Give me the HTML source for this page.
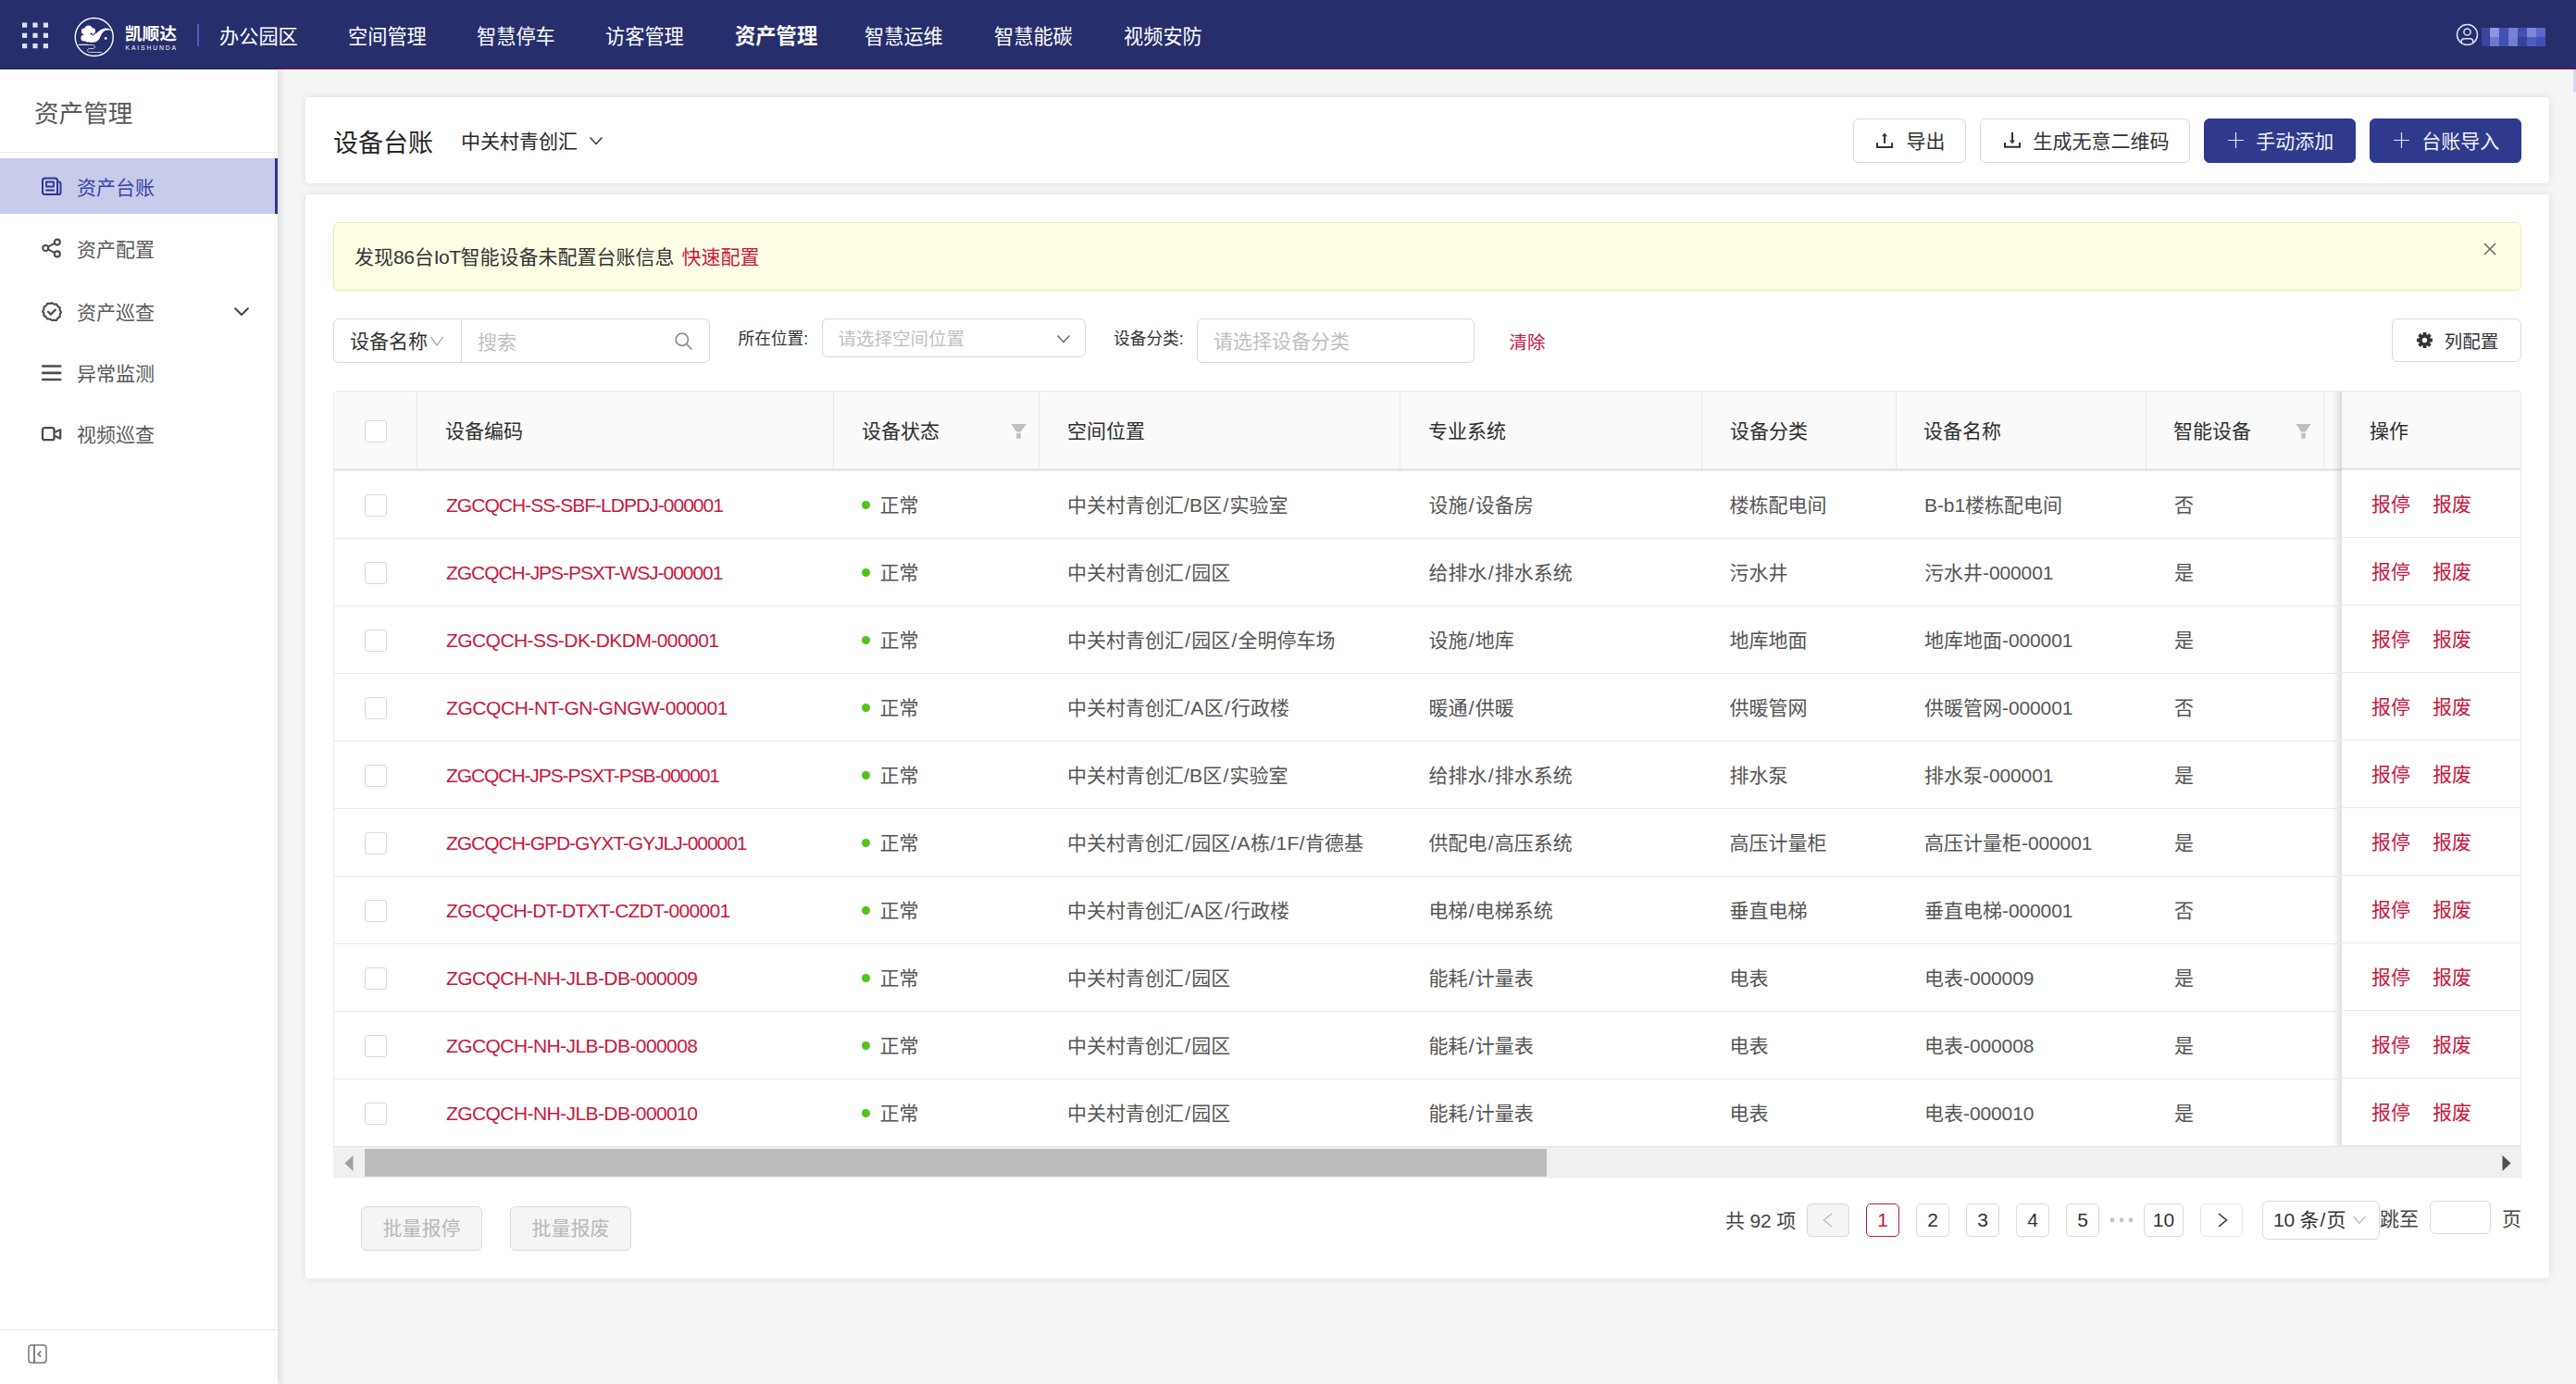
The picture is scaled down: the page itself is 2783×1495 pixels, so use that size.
<!DOCTYPE html>
<html lang="zh-CN"><head><meta charset="utf-8"><title>设备台账</title>
<style>
*{box-sizing:border-box;margin:0;padding:0}
html,body{width:2783px;height:1495px;overflow:hidden}
body{background:#f5f5f5;font-family:"Liberation Sans","Noto Sans CJK SC",sans-serif;font-size:21px;color:#595959;position:relative}
.a{position:absolute}
svg{position:absolute;overflow:visible}
#hd{position:absolute;left:0;top:0;width:2783px;height:75px;background:#272e6c}
.nav{position:absolute;top:0;height:75px;line-height:79px;color:#fff;font-size:21.2px;white-space:nowrap}
.nav.on{font-weight:700;font-size:22.3px}
#sb{position:absolute;left:0;top:75px;width:300px;height:1420px;background:#fff;box-shadow:2px 0 8px rgba(0,0,0,.12)}
.mi{position:absolute;left:0;width:300px;height:60px;line-height:60px;color:#595959;font-size:21px}
.mi span{position:absolute;left:83px;top:2px;white-space:nowrap}
.mi.on{background:#c9cbeb;color:#3644a6;border-right:3px solid #2f3a8c}
.card{position:absolute;left:330px;width:2424px;background:#fff;border-radius:4px;box-shadow:0 0 8px rgba(0,0,0,.1)}
.btn{position:absolute;top:128px;height:48px;border:1px solid #d9d9d9;border-radius:6px;background:#fff;color:#333;font-size:21px;line-height:47px;white-space:nowrap}
.btn.p{background:#2f3a8c;border-color:#2f3a8c;color:#f0f1fd}
.btn span{position:absolute;top:0}
.t{position:absolute;white-space:nowrap}
.box{position:absolute;border:1px solid #d9d9d9;border-radius:6px;background:#fff}
.ph{color:#bfbfbf}
.red{color:#c8183c}
.th{position:absolute;top:423px;height:83px;line-height:86px;color:#2e2e2e;font-size:21px;font-weight:400;white-space:nowrap}
.vd{position:absolute;top:423px;width:1px;height:83px;background:#e9e9e9}
.tr{position:absolute;left:361px;width:2169px;height:73px;border-bottom:1px solid #e9e9e9;line-height:74px}
.fr{position:absolute;left:2530px;width:193px;height:73px;border-bottom:1px solid #e9e9e9;line-height:74px;background:#fff}
.td{position:absolute;top:0;white-space:nowrap;color:#555}
.td.code{color:#c8183c}
.lk{position:absolute;top:0;color:#c8183c;white-space:nowrap}
.cb{position:absolute;width:24px;height:24px;border:1px solid #d9d9d9;border-radius:3px;background:#fff}
.dot{position:absolute;left:570px;top:32px;width:9px;height:9px;border-radius:50%;background:#52c41a}
.pg{position:absolute;top:1300px;height:36px;border:1px solid #d9d9d9;border-radius:5px;background:#fff;color:#333;font-family:"Liberation Sans",sans-serif;font-size:21px;line-height:33px;text-align:center}

</style></head><body>
<div id="hd">
<svg style="left:24px;top:24px" width="29" height="29" viewBox="0 0 29 29" fill="#dfe1f8"><rect x="0" y="0.5" width="5.2" height="5.2"/><rect x="11.4" y="0.5" width="5.2" height="5.2"/><rect x="22.8" y="0.5" width="5.2" height="5.2"/><rect x="0" y="11.7" width="5.2" height="5.2"/><rect x="11.4" y="11.7" width="5.2" height="5.2"/><rect x="22.8" y="11.7" width="5.2" height="5.2"/><rect x="0" y="23" width="5.2" height="5.2"/><rect x="11.4" y="23" width="5.2" height="5.2"/><rect x="22.8" y="23" width="5.2" height="5.2"/></svg>
<svg style="left:80px;top:18px" width="44" height="44" viewBox="0 0 44 44" fill="none" stroke="#fff">
<circle cx="21.75" cy="22" r="20.5" stroke-width="1.4"/>
<g fill="#fff" stroke="none"><circle cx="15.6" cy="14" r="4.5"/><circle cx="11.2" cy="15.8" r="3.3"/><circle cx="19.7" cy="15.6" r="3.3"/><circle cx="11" cy="23" r="3.6"/><circle cx="15.3" cy="19.3" r="4.6"/><circle cx="18.6" cy="24.3" r="3.8"/><circle cx="14.6" cy="24.6" r="3"/>
<path d="M20.5 19.8c2.6-.6 4.4-2.600 6.400-4.200 3-2.400 6.600-3.800 10.200-2.700 1.600.5 3 1.400 4 2.700-1.700-.9-3.400-1.300-5.200-1.100-3 .3-5 2.300-6.300 4.700-1.500 2.800-2.400 6.300-5.600 7.800-1.200.6-2.600.7-3.900.4z"/>
<circle cx="34.2" cy="23.4" r="1.35"/></g>
<circle cx="18.7" cy="18.7" r="1.1" fill="#272e6c" stroke="none"/>
<path d="M4.700 30.500h15.300c3.300 0 3.300 4 0 4h-3.300c-2.800 0-2.800 4 0 4h13.500" stroke-width="0.800" stroke-opacity="0.9"/>
<path d="M4.900 30.300h10" stroke-width="1.200" stroke-opacity="0.700"/>
</svg>
<div class="a" style="left:135px;top:25px;font-size:18.500px;line-height:24px;font-weight:700;color:#fff;letter-spacing:0.200px;white-space:nowrap">凯顺达</div>
<div class="a" style="left:135.5px;top:47px;font-size:6.800px;line-height:10px;color:#fff;letter-spacing:1.850px;white-space:nowrap">KAISHUNDA</div>
<div class="a" style="left:213px;top:26px;width:2px;height:24px;background:#4d5ccc"></div>
<div class="nav" style="left:237px">办公园区</div>
<div class="nav" style="left:376px">空间管理</div>
<div class="nav" style="left:515px">智慧停车</div>
<div class="nav" style="left:654px">访客管理</div>
<div class="nav on" style="left:794px">资产管理</div>
<div class="nav" style="left:934px">智慧运维</div>
<div class="nav" style="left:1074px">智慧能碳</div>
<div class="nav" style="left:1214px">视频安防</div>
<svg style="left:2653px;top:25px" width="25" height="25" viewBox="0 0 25 25" fill="none" stroke="#e0e2fa" stroke-width="1.500"><circle cx="12.500" cy="12.500" r="11"/><circle cx="12.500" cy="9.500" r="3.600"/><path d="M6.200 21.500v-1.500c0-2 1.400-3.200 3.200-3.200h6.200c1.800 0 3.200 1.200 3.200 3.200v1.500"/></svg>
<div class="a" style="left:2681px;top:30px;width:69px;height:20px;background:#4050b5"></div>
<div class="a" style="left:2681px;top:30px;width:9px;height:20px;background:#3a45a0"></div>
<div class="a" style="left:2690px;top:30px;width:10px;height:10px;background:#8f96d8"></div>
<div class="a" style="left:2690px;top:40px;width:10px;height:10px;background:#7078cc"></div>
<div class="a" style="left:2710px;top:30px;width:10px;height:10px;background:#7880d0"></div>
<div class="a" style="left:2710px;top:40px;width:10px;height:10px;background:#747ed0"></div>
<div class="a" style="left:2720px;top:40px;width:10px;height:10px;background:#38429a"></div>
<div class="a" style="left:2730px;top:30px;width:10px;height:10px;background:#8088d4"></div>
<div class="a" style="left:2730px;top:40px;width:10px;height:10px;background:#4e5cc4"></div>
<div class="a" style="left:2740px;top:30px;width:10px;height:10px;background:#5a66c8"></div>
</div>
<div class="a" style="left:0;top:74px;width:300px;height:1px;background:#1a2360"></div><div class="a" style="left:300px;top:74px;width:2483px;height:1px;background:#8a1432"></div>
<div class="a" style="left:2780px;top:75px;width:3px;height:24px;background:#d4d7f0"></div>

<div id="sb">
<div class="t" style="left:37px;top:29px;font-size:26.600px;line-height:38px;color:#595959">资产管理</div>
<div class="a" style="left:0;top:89px;width:300px;height:1px;background:#ececec"></div>
<div class="mi on" style="top:96px"><svg style="left:45px;top:20px" width="22" height="21" viewBox="0 0 22 21" fill="none" stroke="#2c3890" stroke-width="2" stroke-linecap="round" stroke-linejoin="round"><rect x="1" y="1.500" width="16" height="17.500" rx="2.500"/><path d="M17 5.500h1.500c1.400 0 2 .8 2 2v9.500c0 1.200-.8 2-2 2h-2"/><rect x="5" y="5.500" width="8" height="5" stroke-width="1.800"/><path d="M5 14.500h8" stroke-width="1.800"/></svg><span>资产台账</span></div>
<div class="mi" style="top:163px"><svg style="left:45px;top:19px" width="22" height="22" viewBox="0 0 22 22" fill="none" stroke="#4d4d4d" stroke-width="2.100"><circle cx="4.200" cy="11" r="3"/><circle cx="16.800" cy="4.600" r="3"/><circle cx="16.800" cy="17.400" r="3"/><path d="M6.900 9.600l7.200-3.700M6.900 12.400l7.200 3.700"/></svg><span>资产配置</span></div>
<div class="mi" style="top:231px"><svg style="left:45px;top:20px" width="22" height="22" viewBox="0 0 22 22" fill="none" stroke="#4d4d4d" stroke-width="2.200" stroke-linejoin="round"><path d="M11 1.300l2.400 1.400h2.800l1.400 2.400 2.400 1.400v2.800l1.400 2.400-1.400 2.400v2.800l-2.400 1.400-1.400 2.400h-2.800L11 20.700l-2.400-1.400H5.800l-1.400-2.400L2 15.500v-2.800L.6 11 2 8.600V5.800l2.400-1.400 1.400-2.400h2.800z" transform="translate(0.500,0) scale(0.960)"/><path d="M7 10.800l2.800 2.800 5-5" stroke-linecap="round"/></svg><span>资产巡查</span><svg style="left:253px;top:26px" width="16" height="10" viewBox="0 0 16 10" fill="none" stroke="#444" stroke-width="2" stroke-linecap="round" stroke-linejoin="round"><path d="M1.200 1.200L8 8l6.800-6.800"/></svg></div>
<div class="mi" style="top:297px"><svg style="left:45px;top:21.500px" width="22" height="18" viewBox="0 0 22 18" fill="none" stroke="#4d4d4d" stroke-width="2.700" stroke-linecap="round"><path d="M1.200 1.500h19M1.200 8.800h19M1.200 16h19"/></svg><span>异常监测</span></div>
<div class="mi" style="top:363.300px"><svg style="left:45px;top:22.700px" width="22" height="16" viewBox="0 0 22 16" fill="none" stroke="#4d4d4d" stroke-width="2.300" stroke-linejoin="round"><rect x="1" y="1.200" width="12.500" height="13" rx="2"/><path d="M13.800 6l6.400-2.800v9.400L13.800 9.800"/></svg><span>视频巡查</span></div>
<div class="a" style="left:0;top:1361px;width:300px;height:1px;background:#e4e4e4"></div>
<svg style="left:30px;top:1377px" width="21" height="21" viewBox="0 0 21 21" fill="none" stroke="#777" stroke-width="1.500" stroke-linejoin="round"><rect x="1" y="1" width="19" height="19" rx="3"/><path d="M7 1v19" stroke="#555"/><path d="M13.600 8.200l-2.500 2.400 2.500 2.400" stroke-width="1.800" stroke-linecap="round"/></svg>
</div>

<div class="card" style="top:105px;height:93px"></div>
<div class="card" style="top:210px;height:1171px"></div>
<div class="t" style="left:360px;top:134.5px;font-size:27px;line-height:40px;color:#262626">设备台账</div>
<div class="t" style="left:498px;top:137px;font-size:21px;line-height:32px;color:#262626">中关村青创汇</div>
<svg style="left:637px;top:148px" width="14" height="9" viewBox="0 0 14 9" fill="none" stroke="#444" stroke-width="1.700" stroke-linecap="round" stroke-linejoin="round"><path d="M1 1l6 6.500L13 1"/></svg>

<div class="btn" style="left:2002px;width:122px"><svg style="left:24.200px;top:13.800px" width="18.100" height="17.100" viewBox="0 0 18.100 17.100" fill="none" stroke="#333" stroke-width="2"><path d="M1 11.300v4.800h16.100v-4.800"/><path d="M9.050 2.500v9.500"/><path d="M6.100 4.200L9.050 0.400 12 4.200z" fill="#333" stroke="none"/></svg><span style="left:56.500px">导出</span></div>
<div class="btn" style="left:2139px;width:227px"><svg style="left:24.500px;top:14.200px" width="18" height="16.700" viewBox="0 0 18 16.700" fill="none" stroke="#333" stroke-width="2"><path d="M1 10.900v4.800h16v-4.800"/><path d="M9 0v10"/><path d="M6 8.600L9 12.500 12 8.600z" fill="#333" stroke="none"/></svg><span style="left:56.500px">生成无意二维码</span></div>
<div class="btn p" style="left:2381px;width:164px"><svg style="left:25px;top:14.300px" width="17" height="17" viewBox="0 0 17 17" fill="none" stroke="#e4e6fa" stroke-width="1.200"><path d="M8.500 0v17M0 8.500h17"/></svg><span style="left:55.300px">手动添加</span></div>
<div class="btn p" style="left:2560px;width:164px"><svg style="left:25px;top:14.300px" width="17" height="17" viewBox="0 0 17 17" fill="none" stroke="#e4e6fa" stroke-width="1.200"><path d="M8.500 0v17M0 8.500h17"/></svg><span style="left:55.300px">台账导入</span></div>

<div class="a" style="left:360px;top:240px;width:2364px;height:74px;background:#ffffe6;border:1px solid #f8e3ac;border-radius:6px"></div>
<div class="t" style="left:383px;top:262px;line-height:32px;color:#333">发现<span style="letter-spacing:-0.36px">86</span>台<span style="letter-spacing:-0.48px">IoT</span>智能设备未配置台账信息 <span class="red" style="margin-left:2px">快速配置</span></div>
<svg style="left:2683px;top:262px" width="14" height="14" viewBox="0 0 14 14" fill="none" stroke="#666" stroke-width="1.500"><path d="M1 1l12 12M13 1L1 13"/></svg>

<div class="box" style="left:360px;top:344px;width:407px;height:48px"></div>
<div class="a" style="left:498px;top:345px;width:1px;height:46px;background:#d9d9d9"></div>
<div class="t" style="left:378px;top:353px;line-height:32px;color:#333">设备名称</div>
<svg style="left:465px;top:362.500px" width="14" height="11" viewBox="0 0 14 11" fill="none" stroke="#b0b0b0" stroke-width="1.400"><path d="M0.500 0.800L7 10l6.500-9.200"/></svg>
<div class="t ph" style="left:516px;top:353.700px;line-height:32px">搜索</div>
<svg style="left:729px;top:359px" width="19" height="19" viewBox="0 0 19 19" fill="none" stroke="#8c8c8c" stroke-width="1.700" stroke-linecap="round"><circle cx="7.800" cy="7.800" r="6.600"/><path d="M12.700 12.700l5.300 5.300"/></svg>
<div class="t" style="left:797.5px;top:352px;font-size:17.700px;line-height:28px;color:#333">所在位置:</div>
<div class="box" style="left:888px;top:344px;width:285px;height:42px"></div>
<div class="t ph" style="left:905.5px;top:351px;font-size:19.500px;line-height:30px">请选择空间位置</div>
<svg style="left:1142px;top:361.500px" width="14" height="9" viewBox="0 0 14 9" fill="none" stroke="#707070" stroke-width="1.600" stroke-linecap="round" stroke-linejoin="round"><path d="M1 1l6 6.500L13 1"/></svg>
<div class="t" style="left:1203px;top:352px;font-size:17.700px;line-height:28px;color:#333">设备分类:</div>
<div class="box" style="left:1293px;top:344px;width:300px;height:48px"></div>
<div class="t ph" style="left:1311px;top:353px;line-height:32px">请选择设备分类</div>
<div class="t red" style="left:1630.5px;top:353.5px;font-size:19.500px;line-height:32px">清除</div>
<div class="box" style="left:2584px;top:344px;width:140px;height:47px"></div>
<svg style="left:2610.500px;top:359px" width="17" height="17" viewBox="-8.500 -8.500 17 17" fill="#333"><g><rect x="-1.900" y="-8.500" width="3.800" height="17" rx="0.600"/><rect x="-1.900" y="-8.500" width="3.800" height="17" rx="0.600" transform="rotate(45)"/><rect x="-1.900" y="-8.500" width="3.800" height="17" rx="0.600" transform="rotate(90)"/><rect x="-1.900" y="-8.500" width="3.800" height="17" rx="0.600" transform="rotate(135)"/><circle r="6.300"/><circle r="2.700" fill="#fff"/></g></svg>
<div class="t" style="left:2640.700px;top:352.5px;font-size:19.500px;line-height:32px;color:#333">列配置</div>

<div class="a" style="left:360px;top:422px;width:2364px;height:87px;background:#fafafa;border:1px solid #e8e8e8;border-bottom:3px solid #e8e8e8;border-radius:5px 5px 0 0"></div>
<div class="a" style="left:360px;top:509px;width:1px;height:729px;background:#ececec"></div>
<div class="a" style="left:2723px;top:509px;width:1px;height:729px;background:#ececec"></div>
<span class="cb" style="left:394px;top:454px"></span>
<div class="th" style="left:481px">设备编码</div>
<div class="th" style="left:931px">设备状态</div>
<div class="th" style="left:1153px">空间位置</div>
<div class="th" style="left:1543px">专业系统</div>
<div class="th" style="left:1869px">设备分类</div>
<div class="th" style="left:2078px">设备名称</div>
<div class="th" style="left:2348px">智能设备</div>
<div class="vd" style="left:450px"></div><div class="vd" style="left:900px"></div><div class="vd" style="left:1122px"></div><div class="vd" style="left:1512px"></div><div class="vd" style="left:1838px"></div><div class="vd" style="left:2048px"></div><div class="vd" style="left:2318px"></div><div class="vd" style="left:2510px"></div>
<svg style="left:1092px;top:458px" width="17" height="16" viewBox="0 0 17 16" fill="#bfbfbf"><path d="M0.300 0h16.400L10.800 8.500H6.200z"/><rect x="6.200" y="9.800" width="4.600" height="6"/></svg>
<svg style="left:2480px;top:458px" width="17" height="16" viewBox="0 0 17 16" fill="#bfbfbf"><path d="M0.300 0h16.400L10.800 8.500H6.200z"/><rect x="6.200" y="9.800" width="4.600" height="6"/></svg>
<div class="a" style="left:2519px;top:423px;width:11px;height:815px;background:linear-gradient(to right,rgba(0,0,0,0),rgba(0,0,0,.04) 45%,rgba(0,0,0,.13))"></div>
<div class="a" style="left:2530px;top:423px;width:193px;height:83px;background:#fafafa;border-bottom:3px solid #e8e8e8;height:85px;border-radius:0 4px 0 0"></div>
<div class="th" style="left:2560px;top:423px">操作</div>

<div class="tr" style="top:509px"><span class="cb" style="left:33px;top:25px"></span><span class="td code" style="left:121px"><span style="letter-spacing:-0.98px">ZGCQCH-SS-SBF-LDPDJ-000001</span></span><span class="dot"></span><span class="td" style="left:589.5px">正常</span><span class="td" style="left:792px">中关村青创汇<span style="letter-spacing:0.19px">/B</span>区<span style="letter-spacing:2.36px;margin-left:1.18px;margin-right:-1.18px">/</span>实验室</span><span class="td" style="left:1182.5px">设施<span style="letter-spacing:2.36px;margin-left:1.18px;margin-right:-1.18px">/</span>设备房</span><span class="td" style="left:1507.5px">楼栋配电间</span><span class="td" style="left:1718px"><span style="letter-spacing:-0.07px">B-b1</span>楼栋配电间</span><span class="td" style="left:1988px">否</span></div>
<div class="fr" style="top:508px"><span class="lk" style="left:32px">报停</span><span class="lk" style="left:98px">报废</span></div>
<div class="tr" style="top:582px"><span class="cb" style="left:33px;top:25px"></span><span class="td code" style="left:121px"><span style="letter-spacing:-1.05px">ZGCQCH-JPS-PSXT-WSJ-000001</span></span><span class="dot"></span><span class="td" style="left:589.5px">正常</span><span class="td" style="left:792px">中关村青创汇<span style="letter-spacing:2.36px;margin-left:1.18px;margin-right:-1.18px">/</span>园区</span><span class="td" style="left:1182.5px">给排水<span style="letter-spacing:2.36px;margin-left:1.18px;margin-right:-1.18px">/</span>排水系统</span><span class="td" style="left:1507.5px">污水井</span><span class="td" style="left:1718px">污水井<span style="letter-spacing:-0.11px">-000001</span></span><span class="td" style="left:1988px">是</span></div>
<div class="fr" style="top:581px"><span class="lk" style="left:32px">报停</span><span class="lk" style="left:98px">报废</span></div>
<div class="tr" style="top:655px"><span class="cb" style="left:33px;top:25px"></span><span class="td code" style="left:121px"><span style="letter-spacing:-0.57px">ZGCQCH-SS-DK-DKDM-000001</span></span><span class="dot"></span><span class="td" style="left:589.5px">正常</span><span class="td" style="left:792px">中关村青创汇<span style="letter-spacing:2.36px;margin-left:1.18px;margin-right:-1.18px">/</span>园区<span style="letter-spacing:2.36px;margin-left:1.18px;margin-right:-1.18px">/</span>全明停车场</span><span class="td" style="left:1182.5px">设施<span style="letter-spacing:2.36px;margin-left:1.18px;margin-right:-1.18px">/</span>地库</span><span class="td" style="left:1507.5px">地库地面</span><span class="td" style="left:1718px">地库地面<span style="letter-spacing:-0.11px">-000001</span></span><span class="td" style="left:1988px">是</span></div>
<div class="fr" style="top:654px"><span class="lk" style="left:32px">报停</span><span class="lk" style="left:98px">报废</span></div>
<div class="tr" style="top:728px"><span class="cb" style="left:33px;top:25px"></span><span class="td code" style="left:121px"><span style="letter-spacing:-0.44px">ZGCQCH-NT-GN-GNGW-000001</span></span><span class="dot"></span><span class="td" style="left:589.5px">正常</span><span class="td" style="left:792px">中关村青创汇<span style="letter-spacing:0.95px;margin-left:0.47px;margin-right:-0.47px">/A</span>区<span style="letter-spacing:2.36px;margin-left:1.18px;margin-right:-1.18px">/</span>行政楼</span><span class="td" style="left:1182.5px">暖通<span style="letter-spacing:2.36px;margin-left:1.18px;margin-right:-1.18px">/</span>供暖</span><span class="td" style="left:1507.5px">供暖管网</span><span class="td" style="left:1718px">供暖管网<span style="letter-spacing:-0.11px">-000001</span></span><span class="td" style="left:1988px">否</span></div>
<div class="fr" style="top:727px"><span class="lk" style="left:32px">报停</span><span class="lk" style="left:98px">报废</span></div>
<div class="tr" style="top:801px"><span class="cb" style="left:33px;top:25px"></span><span class="td code" style="left:121px"><span style="letter-spacing:-1.09px">ZGCQCH-JPS-PSXT-PSB-000001</span></span><span class="dot"></span><span class="td" style="left:589.5px">正常</span><span class="td" style="left:792px">中关村青创汇<span style="letter-spacing:0.19px">/B</span>区<span style="letter-spacing:2.36px;margin-left:1.18px;margin-right:-1.18px">/</span>实验室</span><span class="td" style="left:1182.5px">给排水<span style="letter-spacing:2.36px;margin-left:1.18px;margin-right:-1.18px">/</span>排水系统</span><span class="td" style="left:1507.5px">排水泵</span><span class="td" style="left:1718px">排水泵<span style="letter-spacing:-0.11px">-000001</span></span><span class="td" style="left:1988px">是</span></div>
<div class="fr" style="top:800px"><span class="lk" style="left:32px">报停</span><span class="lk" style="left:98px">报废</span></div>
<div class="tr" style="top:874px"><span class="cb" style="left:33px;top:25px"></span><span class="td code" style="left:121px"><span style="letter-spacing:-1.04px">ZGCQCH-GPD-GYXT-GYJLJ-000001</span></span><span class="dot"></span><span class="td" style="left:589.5px">正常</span><span class="td" style="left:792px">中关村青创汇<span style="letter-spacing:2.36px;margin-left:1.18px;margin-right:-1.18px">/</span>园区<span style="letter-spacing:0.95px;margin-left:0.47px;margin-right:-0.47px">/A</span>栋<span style="letter-spacing:0.45px;margin-left:0.22px;margin-right:-0.22px">/1F/</span>肯德基</span><span class="td" style="left:1182.5px">供配电<span style="letter-spacing:2.36px;margin-left:1.18px;margin-right:-1.18px">/</span>高压系统</span><span class="td" style="left:1507.5px">高压计量柜</span><span class="td" style="left:1718px">高压计量柜<span style="letter-spacing:-0.11px">-000001</span></span><span class="td" style="left:1988px">是</span></div>
<div class="fr" style="top:873px"><span class="lk" style="left:32px">报停</span><span class="lk" style="left:98px">报废</span></div>
<div class="tr" style="top:947px"><span class="cb" style="left:33px;top:25px"></span><span class="td code" style="left:121px"><span style="letter-spacing:-0.69px">ZGCQCH-DT-DTXT-CZDT-000001</span></span><span class="dot"></span><span class="td" style="left:589.5px">正常</span><span class="td" style="left:792px">中关村青创汇<span style="letter-spacing:0.95px;margin-left:0.47px;margin-right:-0.47px">/A</span>区<span style="letter-spacing:2.36px;margin-left:1.18px;margin-right:-1.18px">/</span>行政楼</span><span class="td" style="left:1182.5px">电梯<span style="letter-spacing:2.36px;margin-left:1.18px;margin-right:-1.18px">/</span>电梯系统</span><span class="td" style="left:1507.5px">垂直电梯</span><span class="td" style="left:1718px">垂直电梯<span style="letter-spacing:-0.11px">-000001</span></span><span class="td" style="left:1988px">否</span></div>
<div class="fr" style="top:946px"><span class="lk" style="left:32px">报停</span><span class="lk" style="left:98px">报废</span></div>
<div class="tr" style="top:1020px"><span class="cb" style="left:33px;top:25px"></span><span class="td code" style="left:121px"><span style="letter-spacing:-0.58px">ZGCQCH-NH-JLB-DB-000009</span></span><span class="dot"></span><span class="td" style="left:589.5px">正常</span><span class="td" style="left:792px">中关村青创汇<span style="letter-spacing:2.36px;margin-left:1.18px;margin-right:-1.18px">/</span>园区</span><span class="td" style="left:1182.5px">能耗<span style="letter-spacing:2.36px;margin-left:1.18px;margin-right:-1.18px">/</span>计量表</span><span class="td" style="left:1507.5px">电表</span><span class="td" style="left:1718px">电表<span style="letter-spacing:-0.11px">-000009</span></span><span class="td" style="left:1988px">是</span></div>
<div class="fr" style="top:1019px"><span class="lk" style="left:32px">报停</span><span class="lk" style="left:98px">报废</span></div>
<div class="tr" style="top:1093px"><span class="cb" style="left:33px;top:25px"></span><span class="td code" style="left:121px"><span style="letter-spacing:-0.58px">ZGCQCH-NH-JLB-DB-000008</span></span><span class="dot"></span><span class="td" style="left:589.5px">正常</span><span class="td" style="left:792px">中关村青创汇<span style="letter-spacing:2.36px;margin-left:1.18px;margin-right:-1.18px">/</span>园区</span><span class="td" style="left:1182.5px">能耗<span style="letter-spacing:2.36px;margin-left:1.18px;margin-right:-1.18px">/</span>计量表</span><span class="td" style="left:1507.5px">电表</span><span class="td" style="left:1718px">电表<span style="letter-spacing:-0.11px">-000008</span></span><span class="td" style="left:1988px">是</span></div>
<div class="fr" style="top:1092px"><span class="lk" style="left:32px">报停</span><span class="lk" style="left:98px">报废</span></div>
<div class="tr" style="top:1166px"><span class="cb" style="left:33px;top:25px"></span><span class="td code" style="left:121px"><span style="letter-spacing:-0.58px">ZGCQCH-NH-JLB-DB-000010</span></span><span class="dot"></span><span class="td" style="left:589.5px">正常</span><span class="td" style="left:792px">中关村青创汇<span style="letter-spacing:2.36px;margin-left:1.18px;margin-right:-1.18px">/</span>园区</span><span class="td" style="left:1182.5px">能耗<span style="letter-spacing:2.36px;margin-left:1.18px;margin-right:-1.18px">/</span>计量表</span><span class="td" style="left:1507.5px">电表</span><span class="td" style="left:1718px">电表<span style="letter-spacing:-0.11px">-000010</span></span><span class="td" style="left:1988px">是</span></div>
<div class="fr" style="top:1165px"><span class="lk" style="left:32px">报停</span><span class="lk" style="left:98px">报废</span></div>
<div class="a" style="left:360px;top:1238px;width:2364px;height:35px;background:#f0f0f0;border-top:1px solid #e6e6e6"></div>
<div class="a" style="left:394px;top:1241px;width:1277px;height:30px;background:#bcbcbc"></div>
<svg style="left:372px;top:1248px" width="10" height="17" viewBox="0 0 10 17" fill="#a29f9f"><path d="M9.500 0v17L0.500 8.500z"/></svg>
<svg style="left:2703px;top:1248px" width="10" height="17" viewBox="0 0 10 17" fill="#4f4f4f"><path d="M0.500 0v17l9-8.500z"/></svg>
<div class="a" style="left:390px;top:1303px;width:131px;height:48px;background:#f5f5f5;border:1px solid #d9d9d9;border-radius:6px;color:#b8b8b8;line-height:46px;text-align:center">批量报停</div>
<div class="a" style="left:551px;top:1303px;width:131px;height:48px;background:#f5f5f5;border:1px solid #d9d9d9;border-radius:6px;color:#b8b8b8;line-height:46px;text-align:center">批量报废</div>
<div class="t" style="left:1864px;top:1303px;line-height:32px;color:#444">共<span style="letter-spacing:-0.22px"> 92 </span>项</div>
<div class="pg" style="left:1952px;width:46px;background:#f5f5f5"><svg style="left:16px;top:9px" width="11" height="16" viewBox="0 0 11 16" fill="none" stroke="#bfbfbf" stroke-width="1.500"><path d="M10 1L1.500 8 10 15"/></svg></div>
<div class="pg" style="left:2016px;width:36px;border-color:#be1c3c;color:#c8183c">1</div>
<div class="pg" style="left:2070px;width:36px">2</div>
<div class="pg" style="left:2124px;width:36px">3</div>
<div class="pg" style="left:2178px;width:36px">4</div>
<div class="pg" style="left:2232px;width:36px">5</div>
<svg style="left:2279px;top:1314px" width="26" height="8" viewBox="0 0 26 8" fill="#c4c4c4"><circle cx="3" cy="4" r="2.400"/><circle cx="13" cy="4" r="2.400"/><circle cx="23" cy="4" r="2.400"/></svg>
<div class="pg" style="left:2316px;width:43px">10</div>
<div class="pg" style="left:2377px;width:46px;border-color:#e6e6e6"><svg style="left:18px;top:9px" width="11" height="16" viewBox="0 0 11 16" fill="none" stroke="#333" stroke-width="1.500"><path d="M1 1l8.500 7L1 15"/></svg></div>
<div class="box" style="left:2444px;top:1297px;width:127px;height:42px"></div>
<div class="t" style="left:2456px;top:1302px;line-height:32px;color:#333"><span style="letter-spacing:-0.27px">10 </span>条<span style="letter-spacing:2.36px;margin-left:1.18px;margin-right:-1.18px">/</span>页</div>
<svg style="left:2542px;top:1313px" width="14" height="10" viewBox="0 0 14 10" fill="none" stroke="#c0c0c0" stroke-width="1.400"><path d="M0.500 0.800L7 8.500l6.500-7.700"/></svg>
<div class="t" style="left:2571px;top:1301px;line-height:32px;color:#444">跳至</div>
<div class="box" style="left:2625px;top:1297px;width:66px;height:36px"></div>
<div class="t" style="left:2703px;top:1301px;line-height:32px;color:#444">页</div>

</body></html>
